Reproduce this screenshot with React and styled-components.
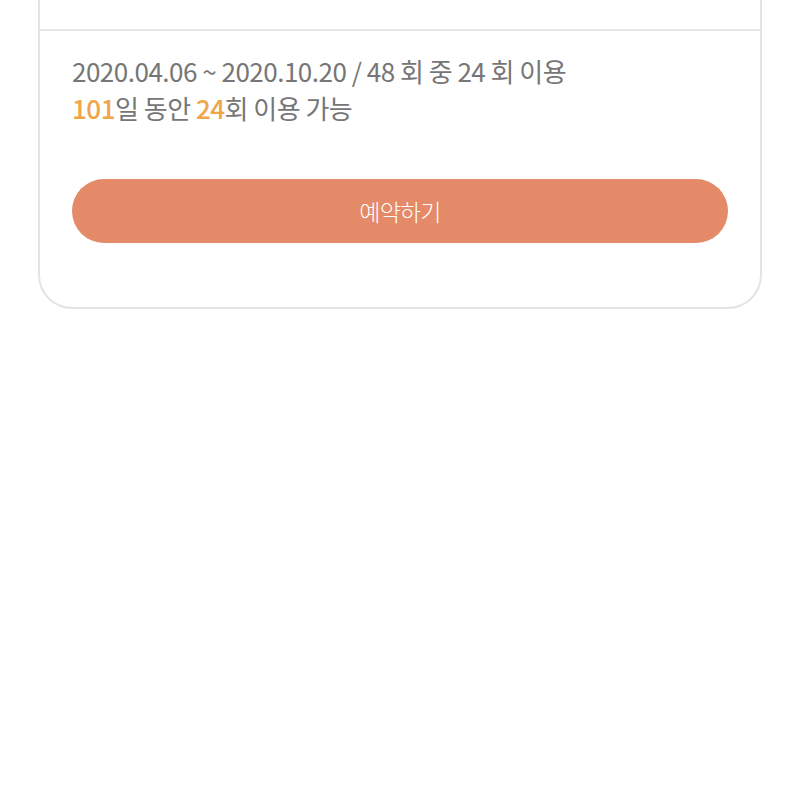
import React from 'react'
import styled, { createGlobalStyle } from 'styled-components'

const GlobalStyle = createGlobalStyle`
  html, body {
    margin: 0;
    padding: 0;
    background: #ffffff;
  }
  body {
    font-family: "Noto Sans CJK KR", "Noto Sans", sans-serif;
  }
`

const Page = styled.div`
  padding: 0 38px;
`

const Card = styled.div`
  border: 2px solid #e3e3e3;
  border-top: none;
  border-radius: 0 0 34px 34px;
  background: #fff;
`

const PrevSection = styled.div`
  height: 29px;
  border-bottom: 2px solid #e6e6e6;
`

const Body = styled.div`
  padding: 21px 32px 64px;
`

const Info = styled.div`
  font-size: 26px;
  line-height: 37px;
  letter-spacing: -0.5px;
  color: #767676;
`

const Num = styled.span`
  color: #f0a54a;
  font-weight: 500;
`

const Button = styled.button`
  display: block;
  width: 100%;
  height: 64px;
  margin-top: 53px;
  border: none;
  border-radius: 32px;
  background: #e48a69;
  color: #ffffff;
  font-family: "Noto Sans CJK KR", "Noto Sans", sans-serif;
  font-size: 23px;
  font-weight: 300;
  letter-spacing: -0.8px;
`

export default function App() {
  return (
    <>
      <GlobalStyle />
      <Page>
        <Card>
          <PrevSection />
          <Body>
            <Info>2020.04.06 ~ 2020.10.20 / 48 회 중 24 회 이용</Info>
            <Info>
              <Num>101</Num>일 동안 <Num>24</Num>회 이용 가능
            </Info>
            <Button>예약하기</Button>
          </Body>
        </Card>
      </Page>
    </>
  )
}
